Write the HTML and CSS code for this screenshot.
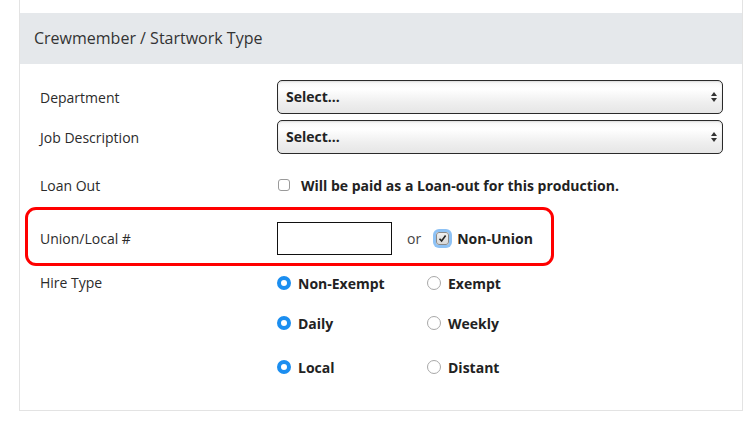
FILE: index.html
```html
<!DOCTYPE html>
<html lang="en">
<head>
    <meta charset="UTF-8">
    <title>Crewmember / Startwork Type</title>
    <link rel="stylesheet" href="styles.css">
</head>
<body>
    <div class="card">
        <div class="card-header">Crewmember / Startwork Type</div>
        <div class="card-body">
            <div class="row row-select">
                <div class="label">Department</div>
                <div class="control">
                    <div class="select">Select...<span class="arrows"><i class="up"></i><i class="down"></i></span></div>
                </div>
            </div>
            <div class="row row-select second">
                <div class="label">Job Description</div>
                <div class="control">
                    <div class="select">Select...<span class="arrows"><i class="up"></i><i class="down"></i></span></div>
                </div>
            </div>
            <div class="row row-loan">
                <div class="label">Loan Out</div>
                <div class="control">
                    <span class="checkbox"></span>
                    <span class="bold">Will be paid as a Loan-out for this production.</span>
                </div>
            </div>
            <div class="row row-union">
                <span class="highlight"></span>
                <div class="label">Union/Local #</div>
                <div class="control">
                    <div class="text-input"></div>
                    <span class="or">or</span>
                    <span class="checkbox checked focus">
                        <svg width="9" height="9" viewBox="0 0 9 9"><path d="M1.5 4.8 L3.6 7 L7.6 1.6" fill="none" stroke="#222" stroke-width="1.6"/></svg>
                    </span>
                    <span class="bold">Non-Union</span>
                </div>
            </div>
            <div class="row row-hire">
                <div class="label">Hire Type</div>
                <div class="radios">
                    <div class="radio-line">
                        <div class="radio-opt"><span class="radio on"></span><span class="bold">Non-Exempt</span></div>
                        <div class="radio-opt"><span class="radio"></span><span class="bold">Exempt</span></div>
                    </div>
                    <div class="radio-line">
                        <div class="radio-opt"><span class="radio on"></span><span class="bold">Daily</span></div>
                        <div class="radio-opt"><span class="radio"></span><span class="bold">Weekly</span></div>
                    </div>
                    <div class="radio-line last">
                        <div class="radio-opt"><span class="radio on"></span><span class="bold">Local</span></div>
                        <div class="radio-opt"><span class="radio"></span><span class="bold">Distant</span></div>
                    </div>
                </div>
            </div>
        </div>
    </div>
</body>
</html>
```

FILE: styles.css
```css
body {
    margin: 0;
    padding: 0;
    background: #ffffff;
    font-family: "Open Sans", Arial, sans-serif;
    color: #2b2b2b;
    font-size: 14px;
}
.card {
    margin-left: 19px;
    width: 722px;
    border: 1px solid #e3e3e3;
    border-top: none;
    padding-top: 13px;
    background: #ffffff;
}
.card-header {
    background: #e5e8eb;
    height: 51px;
    line-height: 51px;
    padding-left: 14px;
    font-size: 16px;
    color: #333;
}
.card-body {
    padding: 16px 19px 13px 20px;
}
.row {
    display: flex;
    align-items: center;
    position: relative;
}
.label {
    width: 237px;
    flex-shrink: 0;
}
.control {
    flex: 1;
    display: flex;
    align-items: center;
}
.row-select {
    height: 34px;
}
.row-select.second {
    margin-top: 6px;
}
.select {
    flex: 1;
    height: 32px;
    line-height: 32px;
    border: 1px solid #2a2a2a;
    border-radius: 5px;
    background: linear-gradient(#f7f7f7, #ffffff 25%, #eeeeee 70%, #e6e6e6);
    box-shadow: inset 0 1px 2px rgba(0, 0, 0, 0.12);
    padding-left: 8px;
    font-weight: bold;
    color: #222;
    position: relative;
}
.arrows {
    position: absolute;
    right: 5px;
    top: 11px;
    display: flex;
    flex-direction: column;
    gap: 2px;
}
.arrows i {
    display: block;
    width: 0;
    height: 0;
    border-left: 3.5px solid transparent;
    border-right: 3.5px solid transparent;
}
.arrows .up {
    border-bottom: 4px solid #333;
}
.arrows .down {
    border-top: 4px solid #333;
}
.row-loan {
    height: 32px;
    margin-top: 15px;
}
.checkbox {
    display: inline-block;
    width: 10px;
    height: 10px;
    border: 1px solid #9a9a9a;
    border-radius: 3px;
    background: #fff;
    margin-left: 1px;
    margin-right: 11px;
    position: relative;
}
.checkbox.checked {
    background: linear-gradient(#f0f0f0, #d8d8d8);
    border-color: #8a8a8a;
    width: 11px;
    height: 11px;
    margin-left: 0;
    margin-right: 8px;
}
.checkbox.focus {
    box-shadow: 0 0 0 3px #8ec2f5;
}
.checkbox svg {
    position: absolute;
    left: 1px;
    top: 1px;
}
.bold {
    font-weight: bold;
    color: #222;
}
.row-union {
    height: 56px;
    padding-top: 3px;
    margin-top: 6px;
}
.highlight {
    position: absolute;
    left: -15px;
    top: 0;
    width: 523px;
    height: 53px;
    border: 3px solid #ff0000;
    border-radius: 11px;
}
.text-input {
    width: 113px;
    height: 31px;
    border: 1px solid #111;
    background: #fff;
}
.or {
    color: #444;
    margin-left: 15px;
    margin-right: 15px;
}
.row-hire {
    align-items: flex-start;
    margin-top: 7px;
}
.row-hire .label {
    line-height: 20px;
}
.radios {
    display: flex;
    flex-direction: column;
}
.radio-line {
    display: flex;
    align-items: center;
    height: 20px;
    margin-bottom: 20px;
}
.radio-line + .radio-line.last {
    margin-top: 4px;
}
.radio-opt {
    width: 150px;
    display: flex;
    align-items: center;
}
.radio {
    width: 12px;
    height: 12px;
    border: 1px solid #a8a8a8;
    border-radius: 50%;
    margin-right: 7px;
    background: #fff;
    box-sizing: content-box;
}
.radio.on {
    width: 6px;
    height: 6px;
    border: 4px solid #1b8ef0;
    background: #fff;
}
```
